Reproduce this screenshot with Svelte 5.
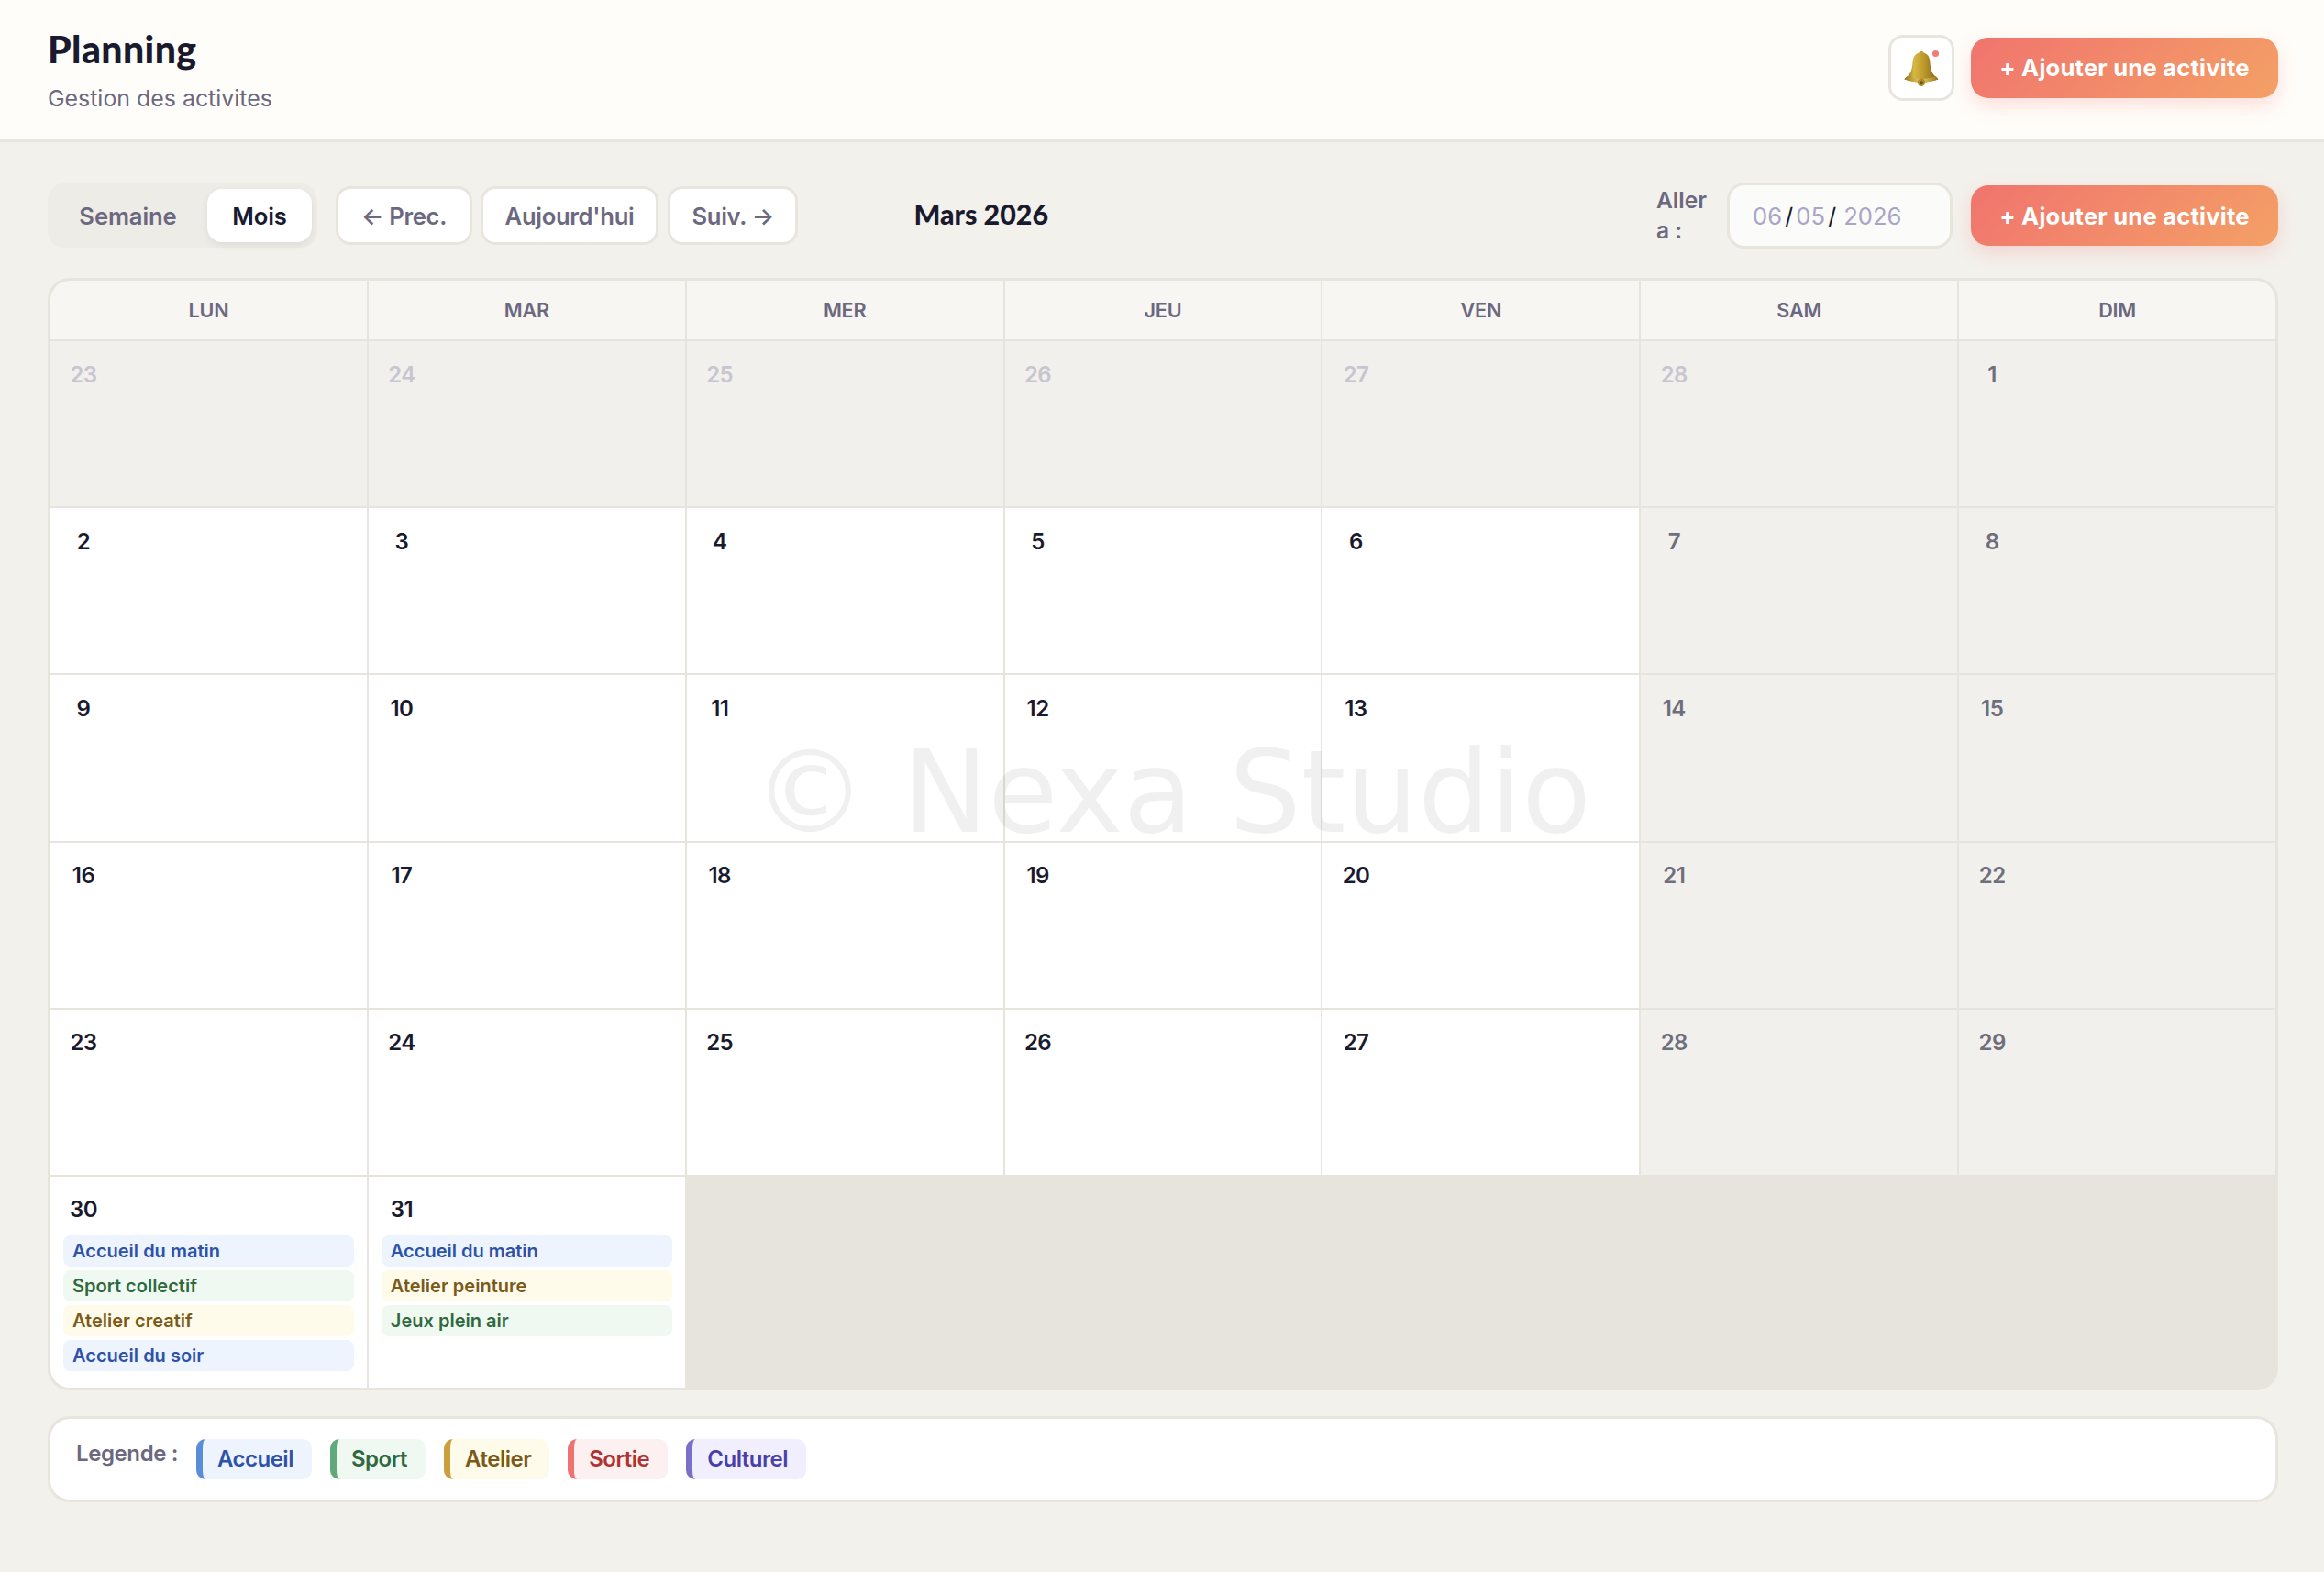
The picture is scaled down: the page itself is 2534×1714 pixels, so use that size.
<script lang="ts">
  const days = ["LUN", "MAR", "MER", "JEU", "VEN", "SAM", "DIM"];

  type Chip = { label: string; kind: string };
  type Cell = { day: number; state: "" | "weekend" | "other"; chips?: Chip[] };

  const cells: Cell[] = [];
  for (const d of [23, 24, 25, 26, 27, 28]) cells.push({ day: d, state: "other" });
  for (let d = 1; d <= 29; d++) {
    const dow = (d + 6) % 7; // 1 mars 2026 is a sunday
    cells.push({ day: d, state: dow === 0 || dow === 6 ? "weekend" : "" });
  }
  cells.push({
    day: 30,
    state: "",
    chips: [
      { label: "Accueil du matin", kind: "accueil" },
      { label: "Sport collectif", kind: "sport" },
      { label: "Atelier creatif", kind: "atelier" },
      { label: "Accueil du soir", kind: "accueil" }
    ]
  });
  cells.push({
    day: 31,
    state: "",
    chips: [
      { label: "Accueil du matin", kind: "accueil" },
      { label: "Atelier peinture", kind: "atelier" },
      { label: "Jeux plein air", kind: "sport" }
    ]
  });

  const legend = [
    { label: "Accueil", kind: "accueil" },
    { label: "Sport", kind: "sport" },
    { label: "Atelier", kind: "atelier" },
    { label: "Sortie", kind: "sortie" },
    { label: "Culturel", kind: "culturel" }
  ];
</script>

<div class="page">
  <header class="topbar">
    <div class="heading">
      <h1>Planning</h1>
      <p>Gestion des activites</p>
    </div>
    <div class="actions">
      <button class="bell" aria-label="Notifications">
        <svg width="40" height="40" viewBox="0 0 38 38">
          <defs>
            <linearGradient id="bellBody" x1="0" y1="0" x2="1" y2="0">
              <stop offset="0" stop-color="#7d5d12" />
              <stop offset="0.28" stop-color="#d6b844" />
              <stop offset="0.55" stop-color="#c09c2c" />
              <stop offset="1" stop-color="#836214" />
            </linearGradient>
            <linearGradient id="bellRim" x1="0" y1="0" x2="1" y2="0">
              <stop offset="0" stop-color="#9c7a22" />
              <stop offset="0.5" stop-color="#e8cf66" />
              <stop offset="1" stop-color="#96731c" />
            </linearGradient>
          </defs>
          <path d="M19 1c1.400 0 2.300.6 2.700 1.700 3.900 1 5.900 4.300 6.300 9.300.5 6 1.300 10.500 4.500 13.800 1.500 1.500 3.100 2.800 4 4.200-5 1.900-11 3-17.500 3s-12.500-1.100-17.500-3c.9-1.400 2.500-2.700 4-4.200 3.200-3.300 4-7.800 4.500-13.800.4-5 2.400-8.300 6.300-9.300.4-1.100 1.300-1.700 2.700-1.700z" fill="url(#bellBody)" />
          <path d="M1.500 30c5 1.900 11 3 17.500 3s12.500-1.100 17.500-3c-.8-1.300-1.800-2.300-2.800-3.300-4 1.800-9 2.800-14.700 2.800s-10.700-1-14.700-2.800c-1 1-2 2-2.800 3.300z" fill="url(#bellRim)" />
          <circle cx="19" cy="33" r="4" fill="#b08c2a" />
          <circle cx="19" cy="33.500" r="1.900" fill="#6d5314" />
        </svg>
        <span class="dot"></span>
      </button>
      <button class="add">+ Ajouter une activite</button>
    </div>
  </header>

  <main>
    <div class="toolbar">
      <div class="toggle">
        <button class="off">Semaine</button>
        <button class="on">Mois</button>
      </div>
      <button class="nav prev">← Prec.</button>
      <button class="nav">Aujourd'hui</button>
      <button class="nav">Suiv. →</button>
      <h2>Mars 2026</h2>
      <label class="goto" for="goto-date">Aller a :</label>
      <div class="date" id="goto-date">
        <span>06</span><i>/</i><span>05</span><i>/</i><span class="year">2026</span>
      </div>
      <button class="add">+ Ajouter une activite</button>
    </div>

    <div class="calendar">
      {#each days as d}
        <div class="dayname">{d}</div>
      {/each}
      {#each cells as c}
        <div class={["cell", c.state]}>
          <span class="num">{c.day}</span>
          {#each c.chips ?? [] as chip}
            <div class={["chip", chip.kind]}>{chip.label}</div>
          {/each}
        </div>
      {/each}
    </div>

    <div class="legend">
      <span class="legend-title">Legende :</span>
      {#each legend as l}
        <span class={["tag", l.kind]}>{l.label}</span>
      {/each}
    </div>
  </main>

  <div class="watermark">© Nexa Studio</div>
</div>

<style>
  :global(body) {
    margin: 0;
    background: #f3f1ec;
  }

  .page {
    position: relative;
    min-height: 1714px;
    font-family: "Inter", "Noto Sans", sans-serif;
    color: #1a1a2e;
    overflow: hidden;
  }

  button {
    font: inherit;
    cursor: pointer;
  }

  .topbar {
    height: 152px;
    box-sizing: content-box;
    display: flex;
    align-items: center;
    justify-content: space-between;
    padding: 0 50px 0 52px;
    background: #fffdf9;
    border-bottom: 3px solid #e8e5df;
  }

  .heading {
    margin-top: 3px;
  }

  h1 {
    margin: 0;
    font-family: "Lato", sans-serif;
    font-size: 41px;
    font-weight: 900;
    line-height: 48px;
    margin-top: -3px;
    letter-spacing: 0.4px;
  }

  .topbar p {
    margin: 14px 0 0;
    font-size: 24.900px;
    line-height: 30px;
    color: #6b6880;
  }

  .actions {
    display: flex;
    align-items: center;
    gap: 18px;
    margin-bottom: 5px;
  }

  .bell {
    position: relative;
    width: 72px;
    height: 72px;
    padding: 0;
    display: flex;
    align-items: center;
    justify-content: center;
    background: #fff;
    border: 3px solid #e8e5df;
    border-radius: 16px;
  }

  .bell svg {
    margin-top: 3px;
  }

  .dot {
    position: absolute;
    top: 14px;
    right: 14px;
    width: 7px;
    height: 7px;
    border-radius: 50%;
    background: #f07a75;
  }

  .add {
    height: 66px;
    width: 335px;
    padding: 0;
    border: 0;
    border-radius: 19px;
    color: #fff;
    font-size: 25.600px;
    font-weight: 700;
    letter-spacing: 0.2px;
    background: linear-gradient(135deg, #f0746e, #f4a066);
    box-shadow: 0 8px 20px rgba(240, 116, 110, 0.22);
  }

  main {
    padding: 44px 50px 0 52px;
  }

  .toolbar {
    display: flex;
    align-items: center;
    height: 72px;
    margin-bottom: 32px;
  }

  .toggle {
    display: flex;
    align-items: center;
    width: 294px;
    height: 70px;
    box-sizing: border-box;
    padding: 6px;
    margin-right: 20px;
    background: #eeece7;
    border-radius: 18px;
  }

  .toggle button {
    height: 58px;
    border: 0;
    border-radius: 16px;
    background: transparent;
    color: #6b6880;
    font-size: 25.600px;
    font-weight: 600;
    letter-spacing: -0.1px;
    padding: 0;
  }

  .toggle .off {
    width: 168px;
    padding-right: 5px;
  }

  .toggle .on {
    width: 114px;
    background: #fff;
    color: #1a1a2e;
    box-shadow: 0 3px 8px rgba(0, 0, 0, 0.07);
  }

  .nav {
    height: 64px;
    padding: 0 23.500px;
    margin-right: 10px;
    background: #fff;
    border: 3px solid #e8e5df;
    border-radius: 16px;
    color: #6b6880;
    font-size: 25.600px;
    font-weight: 600;
    letter-spacing: -0.3px;
  }

  .nav.prev {
    padding: 0 25px;
    margin-right: 9px;
  }

  h2 {
    margin: -4px 0 0 116px;
    font-family: "Lato", sans-serif;
    font-size: 30.400px;
    font-weight: 900;
  }

  .goto {
    margin-left: auto;
    width: 57px;
    margin-right: 20px;
    font-size: 24.500px;
    line-height: 33px;
    font-weight: 600;
    color: #6b6880;
  }

  .date {
    width: 246px;
    height: 72px;
    box-sizing: border-box;
    display: flex;
    align-items: center;
    padding: 0 25px;
    margin-right: 20px;
    background: #fbfbf9;
    border: 3px solid #e8e5df;
    border-radius: 19px;
    font-size: 25.600px;
    color: #a8a5c6;
  }

  .date i {
    font-style: normal;
    color: #1a1a2e;
    margin: 0 3px;
  }

  .date .year {
    margin-left: 5px;
  }

  .calendar {
    display: grid;
    grid-template-columns: repeat(7, 1fr);
    gap: 2px;
    background: #e7e4dd;
    border: 3px solid #e7e4dd;
    border-radius: 24px;
    overflow: hidden;
  }

  .dayname {
    height: 64px;
    display: flex;
    align-items: center;
    justify-content: center;
    background: #f7f6f2;
    color: #6b6880;
    font-size: 21.600px;
    font-weight: 600;
    letter-spacing: -0.2px;
  }

  .cell {
    min-height: 180.200px;
    box-sizing: border-box;
    padding: 14px 14px 14px 14px;
    background: #fff;
  }

  .cell.weekend,
  .cell.other {
    background: #f1f0ec;
  }

  .num {
    display: flex;
    align-items: center;
    justify-content: center;
    width: 44px;
    height: 44px;
    margin-bottom: 6px;
    font-size: 24px;
    font-weight: 600;
    letter-spacing: -0.6px;
  }

  .weekend .num {
    color: #6f6e7c;
  }

  .other .num {
    color: #c7c6d0;
  }

  .chip {
    height: 34px;
    margin-bottom: 4px;
    padding: 0 10px;
    display: flex;
    align-items: center;
    border-radius: 8px;
    font-size: 20px;
    font-weight: 600;
  }

  .accueil {
    background: #edf4fd;
    color: #2d52a8;
  }

  .sport {
    background: #eff9f2;
    color: #2f6a3f;
  }

  .atelier {
    background: #fefbeb;
    color: #7a5a18;
  }

  .sortie {
    background: #fcf0f0;
    color: #b03232;
  }

  .culturel {
    background: #f1effe;
    color: #4a3fa8;
  }

  .legend {
    display: flex;
    align-items: flex-start;
    gap: 20px;
    margin-top: 28px;
    padding: 22px 29px 22px 28px;
    background: #fff;
    border: 3px solid #e8e5df;
    border-radius: 24px;
  }

  .legend-title {
    line-height: 32px;
    font-size: 24px;
    font-weight: 600;
    color: #6b6880;
    letter-spacing: -0.4px;
  }

  .tag {
    height: 44px;
    box-sizing: border-box;
    display: flex;
    align-items: center;
    padding: 0 20px 0 16px;
    border-radius: 10px;
    border-left: 7px solid;
    font-size: 24px;
    font-weight: 600;
    letter-spacing: -0.5px;
  }

  .tag.accueil {
    border-left-color: #5a8dd8;
  }

  .tag.sport {
    border-left-color: #5fa97c;
  }

  .tag.atelier {
    border-left-color: #cba03c;
  }

  .tag.sortie {
    border-left-color: #ef7272;
  }

  .tag.culturel {
    border-left-color: #7a70c8;
  }

  .watermark {
    position: absolute;
    left: 821px;
    top: 790px;
    font-family: "DejaVu Sans", sans-serif;
    font-size: 124px;
    line-height: 148px;
    color: rgba(0, 0, 0, 0.06);
    white-space: nowrap;
    pointer-events: none;
  }
</style>
